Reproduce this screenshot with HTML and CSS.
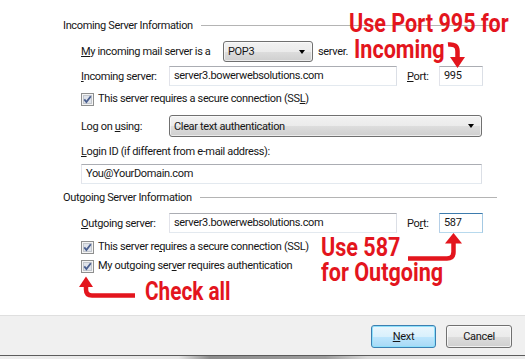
FILE: index.html
```html
<!DOCTYPE html>
<html>
<head>
<meta charset="utf-8">
<title>Account settings</title>
<link rel="stylesheet" href="styles.css">
</head>
<body>
<div class="window">
  <div class="content">
    <section class="group">
      <div class="group-title"><span>Incoming Server Information</span><i class="rule"></i></div>
      <div class="fields">
        <div class="row row-type">
          <span class="lbl lbl-type"><u>M</u>y incoming mail server is a</span>
          <div class="select select-type"><span class="sel-text">POP3</span><span class="caret"></span></div>
          <span class="after">server.</span>
        </div>
        <div class="row row-server">
          <span class="lbl lbl-col"><u>I</u>ncoming server:</span>
          <div class="input input-server">server3.bowerwebsolutions.com</div>
          <span class="lbl lbl-port"><u>P</u>ort:</span>
          <div class="input input-port">995</div>
        </div>
        <div class="row row-check first-check">
          <span class="check"><svg width="13" height="13" viewBox="0 0 13 13"><rect x="0.5" y="0.5" width="12" height="12" fill="#f4f4f4" stroke="#8e8f8f"/><rect x="2.5" y="2.5" width="8" height="8" fill="#dfe3ea" stroke="#c2c6cc"/><path d="M3.3 6.4 L5.4 9 L9.8 3.2" fill="none" stroke="#4a5f8f" stroke-width="1.8"/></svg></span>
          <span class="check-lbl">This server requires a secure connection (SS<u>L</u>)</span>
        </div>
        <div class="row row-logon">
          <span class="lbl lbl-col">Log on <u>u</u>sing:</span>
          <div class="select select-logon"><span class="sel-text">Clear text authentication</span><span class="caret"></span></div>
        </div>
        <div class="row row-loginlbl">
          <span class="lbl"><u>L</u>ogin ID (if different from e-mail address):</span>
        </div>
        <div class="row row-login">
          <div class="input input-login">You@YourDomain.com</div>
        </div>
      </div>
    </section>
    <section class="group group-out">
      <div class="group-title"><span>Outgoing Server Information</span><i class="rule"></i></div>
      <div class="fields">
        <div class="row row-out">
          <span class="lbl lbl-col"><u>O</u>utgoing server:</span>
          <div class="input input-server">server3.bowerwebsolutions.com</div>
          <span class="lbl lbl-port">Po<u>r</u>t:</span>
          <div class="input input-port focus">587</div>
        </div>
        <div class="row row-check out-check1">
          <span class="check"><svg width="13" height="13" viewBox="0 0 13 13"><rect x="0.5" y="0.5" width="12" height="12" fill="#f4f4f4" stroke="#8e8f8f"/><rect x="2.5" y="2.5" width="8" height="8" fill="#dfe3ea" stroke="#c2c6cc"/><path d="M3.3 6.4 L5.4 9 L9.8 3.2" fill="none" stroke="#4a5f8f" stroke-width="1.8"/></svg></span>
          <span class="check-lbl">This server re<u>q</u>uires a secure connection (SSL)</span>
        </div>
        <div class="row row-check out-check2">
          <span class="check"><svg width="13" height="13" viewBox="0 0 13 13"><rect x="0.5" y="0.5" width="12" height="12" fill="#f4f4f4" stroke="#8e8f8f"/><rect x="2.5" y="2.5" width="8" height="8" fill="#dfe3ea" stroke="#c2c6cc"/><path d="M3.3 6.4 L5.4 9 L9.8 3.2" fill="none" stroke="#4a5f8f" stroke-width="1.8"/></svg></span>
          <span class="check-lbl">My outgoing ser<u>v</u>er requires authentication</span>
        </div>
      </div>
    </section>
  </div>
  <footer class="footer">
    <button class="btn btn-default"><u>N</u>ext</button>
    <button class="btn">Cancel</button>
  </footer>
  <div class="strip"></div>

  <div class="note note-in">Use Port 995 for<br><span class="indent">Incoming</span></div>
  <svg class="arrow arrow-in" width="26" height="30" viewBox="0 0 26 30"><path d="M4 4.5 Q13.5 3.5 13.5 11 L13.5 18" fill="none" stroke="#e3151d" stroke-width="4.5"/><polygon points="6,17 21,17 13.5,28" fill="#e3151d"/></svg>
  <div class="note note-out">Use 587<br>for Outgoing</div>
  <svg class="arrow arrow-out" width="62" height="36" viewBox="0 0 62 36"><path d="M4 30.5 L43 30.5 Q49.5 30.5 49.5 24 L49.5 14" fill="none" stroke="#e3151d" stroke-width="4.5"/><polygon points="41,15.5 58,15.5 49.5,5" fill="#e3151d"/></svg>
  <div class="note note-check">Check all</div>
  <svg class="arrow arrow-check" width="64" height="28" viewBox="0 0 64 28"><path d="M59 21.5 L16 21.5 Q10 21.5 10 15.5 L10 12" fill="none" stroke="#e3151d" stroke-width="4.5"/><polygon points="3,13 17,13 10,2.5" fill="#e3151d"/></svg>
</div>
</body>
</html>
```

FILE: styles.css
```css
* { box-sizing: border-box; }
html, body { margin: 0; padding: 0; background: #ffffff; }
body {
  font-family: Roboto, "Liberation Sans", Arial, sans-serif;
  font-size: 11px;
  letter-spacing: -0.35px;
  color: #161616;
}
u { text-decoration: underline; text-underline-offset: 1px; }

.window { position: relative; width: 525px; height: 359px; overflow: hidden; background: #fff; }

.content { height: 315px; padding: 18px 0 0 63px; }

.group-title { display: flex; align-items: center; height: 15px; line-height: 15px; width: 434px; }
.group-title .rule { flex: 1; height: 1px; background: #b4b4b4; margin-left: 8px; }
.group-out { margin-top: 6px; }

.fields { padding-left: 18px; }
.row { display: flex; align-items: center; }

.row-type { margin-top: 8px; height: 21px; }
.row-server { margin-top: 4px; height: 20px; }
.first-check { margin-top: 6px; }
.row-logon { margin-top: 9px; height: 22px; }
.row-loginlbl { margin-top: 7px; height: 15px; }
.row-login { margin-top: 5px; height: 20px; }
.row-out { margin-top: 8px; height: 20px; }
.out-check1 { margin-top: 7px; }
.out-check2 { margin-top: 5px; }
.row-check { height: 14px; }

.lbl { white-space: nowrap; line-height: 15px; }
.lbl-type { width: 142px; }
.lbl-col { width: 88px; }
.lbl-port { width: 32px; margin-left: 10px; }
.after { margin-left: 5px; }

.select {
  display: flex; align-items: center; justify-content: space-between;
  border: 1px solid #707070; border-radius: 3px;
  background: linear-gradient(#f2f2f2 0%, #ebebeb 50%, #dddddd 51%, #cfcfcf 100%);
  padding: 0 7px 0 4px;
  box-shadow: inset 0 0 0 1px rgba(255,255,255,0.6);
}
.select-type { width: 90px; height: 21px; }
.select-logon { width: 313px; height: 22px; }
.caret { width: 0; height: 0; border-left: 3.5px solid transparent; border-right: 3.5px solid transparent; border-top: 4px solid #000; }

.input {
  height: 20px; line-height: 17px; padding: 0 4px;
  border: 1px solid; border-color: #abadb3 #dbdfe6 #e3e9ef #e2e3ea;
  background: #fff; white-space: nowrap;
}
.input-server { width: 228px; }
.input-port { width: 44px; }
.input-port.focus { border-color: #3d7bad #a4c9e3 #b7d9ed #b5cfe7; }
.input-login { width: 401px; }

.check { width: 13px; height: 13px; display: block; }
.check svg { display: block; }
.check-lbl { margin-left: 4px; line-height: 14px; }

.footer {
  height: 40px; border-top: 1px solid #dfdfdf; background: #f0f0f0;
  display: flex; justify-content: flex-end; gap: 10px;
  padding: 9px 13px 0 0;
}
.btn {
  height: 23px; width: 66px; padding: 0; margin: 0;
  font-family: Roboto, "Liberation Sans", Arial, sans-serif; font-size: 11px; letter-spacing: -0.3px; color: #161616;
  border: 1px solid #707070; border-radius: 3px;
  background: linear-gradient(#f2f2f2 0%, #ebebeb 50%, #dddddd 51%, #cfcfcf 100%);
  box-shadow: inset 0 0 0 1px rgba(255,255,255,0.7);
}
.btn-default {
  width: 65px;
  border-color: #3c7fb1;
  background: linear-gradient(#eaf6fd 0%, #d9f0fc 50%, #bee6fd 51%, #a7d9f5 100%);
  box-shadow: inset 0 0 0 1px #8ee0fb;
}

.strip {
  height: 4px; border-top: 1px solid #5c5c5c;
  background: linear-gradient(to right, #ededed 0%, #e6e6e6 34%, #8d8d8d 40%, #9d9d9d 62%, #d8d8d8 70%, #ececec 100%);
}

.note {
  position: absolute; color: #e3151d;
  font-family: Roboto, "Liberation Sans", Arial, sans-serif; font-weight: 700;
  font-size: 26px; line-height: 26px; letter-spacing: 0; white-space: nowrap;
  transform: scaleX(0.83); transform-origin: 0 0;
}
.note-in { left: 349px; top: 10px; }
.note-in .indent { margin-left: 6px; }
.note-out { left: 321px; top: 235px; line-height: 25px; }
.note-check { left: 145px; top: 279px; font-size: 25px; line-height: 25px; }

.arrow { position: absolute; display: block; }
.arrow-in { left: 444px; top: 40px; }
.arrow-out { left: 404px; top: 228px; }
.arrow-check { left: 76px; top: 274px; }
```
